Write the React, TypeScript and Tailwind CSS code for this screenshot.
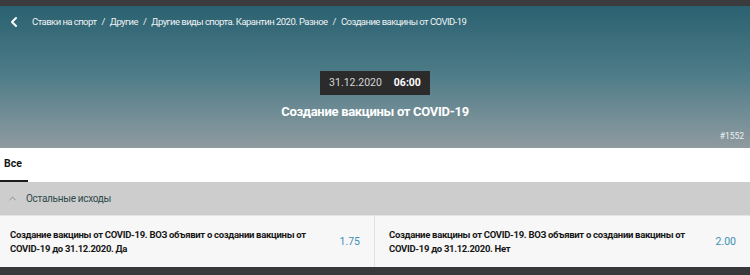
import React from 'react';
import { ChevronLeft, ChevronUp } from 'lucide-react';

const crumbs = ['Ставки на спорт', 'Другие', 'Другие виды спорта. Карантин 2020. Разное', 'Создание вакцины от COVID-19'];

const outcomes = [
  { label: 'Создание вакцины от COVID-19. ВОЗ объявит о создании вакцины от COVID-19 до 31.12.2020. Да', odd: '1.75' },
  { label: 'Создание вакцины от COVID-19. ВОЗ объявит о создании вакцины от COVID-19 до 31.12.2020. Нет', odd: '2.00' },
];

const App: React.FC = () => {
  return (
    <div className="w-[750px] h-[275px] overflow-hidden bg-[#38383a] font-['Roboto',sans-serif]">
      <div className="h-[6px] bg-[#3b3b3d]" />

      {/* Event header */}
      <header className="relative h-[142px] bg-gradient-to-b from-[#2a6170] via-[#4f7d89] to-[#8f9ba0] flex flex-col">
        <div className="h-[32px] flex items-center pl-[6px] text-[9.5px] text-[#eef3f4] tracking-[-0.55px]">
          <ChevronLeft size={16} strokeWidth={3} className="text-white mr-[10px]" />
          {crumbs.map((c, i) => (
            <span key={i} className="flex items-center">
              {i > 0 && <span className="mx-[5px]">/</span>}
              {c}
            </span>
          ))}
        </div>

        <div className="flex flex-col items-center mt-[33px]">
          <div className="flex items-center h-[24px] px-[9px] gap-[12px] bg-[#2b2b2c] text-[10.5px]">
            <span className="text-[#d6d6d6]">31.12.2020</span>
            <span className="text-white font-bold">06:00</span>
          </div>
          <h1 className="mt-[7px] text-[13px] font-bold text-white tracking-[-0.3px]">Создание вакцины от COVID-19</h1>
        </div>

        <span className="absolute right-[6px] bottom-[5px] text-[8.5px] text-[#eef1f2]">#1552</span>
      </header>

      {/* Tabs */}
      <div className="h-[34px] bg-white flex items-end">
        <div className="w-[28px] h-full pl-[4px] flex items-center border-b-2 border-[#1c1c1c] text-[10.5px] font-bold text-[#151515]">
          Все
        </div>
      </div>

      {/* Group */}
      <div className="h-[33px] bg-[#cdcdcd] flex items-center pl-[7px] gap-[8px] text-[10px] tracking-[-0.3px] text-[#2d4a4a]">
        <ChevronUp size={11} strokeWidth={2} className="text-[#7e8a8a]" />
        <span>Остальные исходы</span>
      </div>

      <div className="grid grid-cols-2 h-[52px] bg-[#f7f7f7] border-t-[1px] border-[#e4e4e4]">
        {outcomes.map((o, i) => (
          <div
            key={i}
            className={`flex items-center justify-between pl-[10px] pr-[14px] ${i === 0 ? 'border-r border-[#e2e2e2]' : 'pl-[14px]'}`}
          >
            <span className="w-[314px] text-[9.5px] font-bold leading-[14px] text-[#161616] tracking-[-0.3px]">{o.label}</span>
            <span className="text-[10.5px] text-[#3d8fb5]">{o.odd}</span>
          </div>
        ))}
      </div>
    </div>
  );
};

export default App;
